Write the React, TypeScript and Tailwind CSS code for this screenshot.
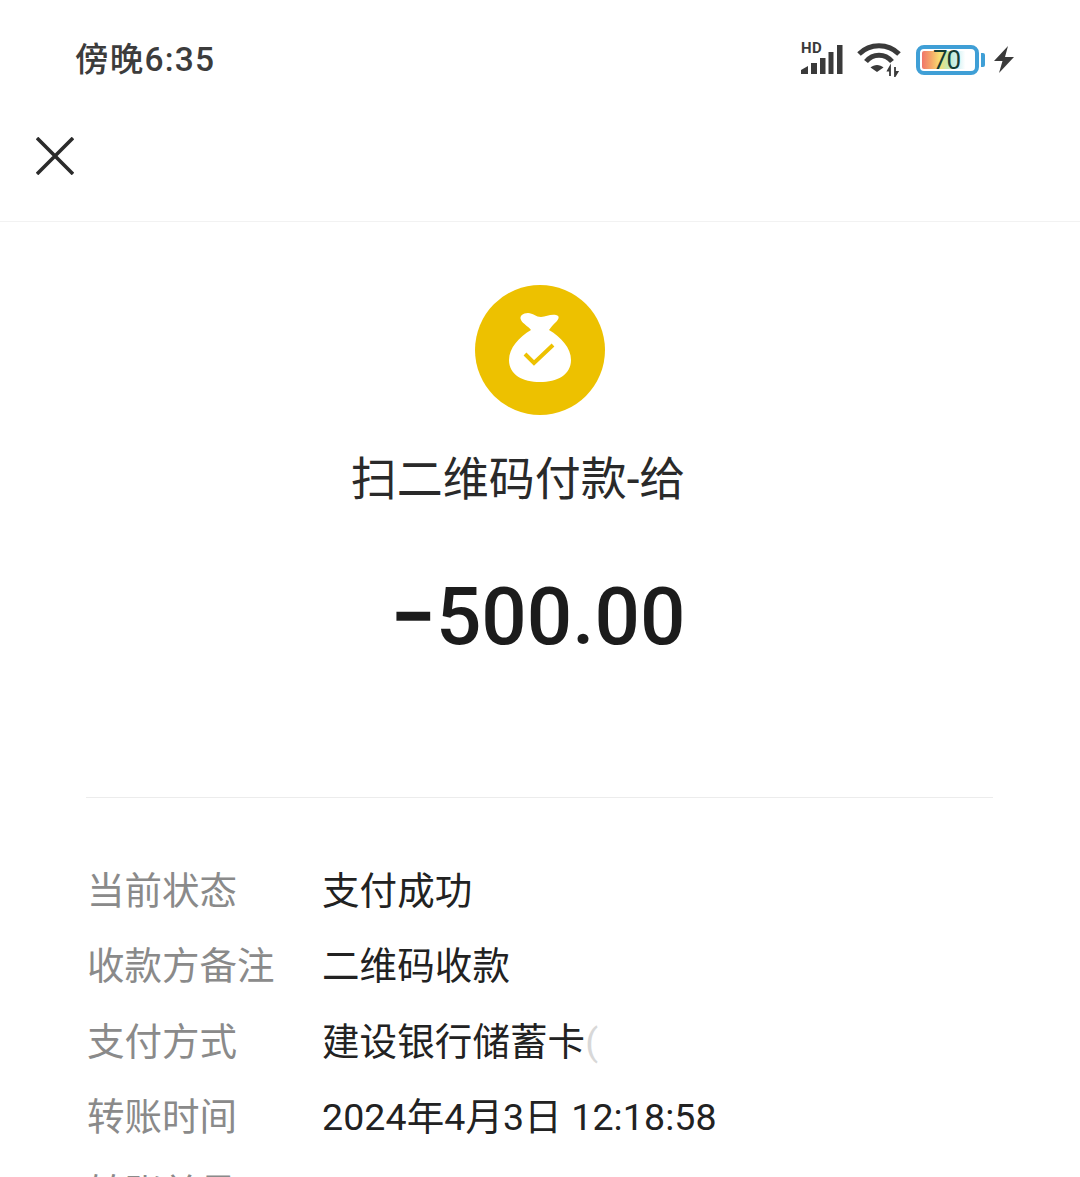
const rows = [
  { label: '当前状态', value: '支付成功' },
  { label: '收款方备注', value: '二维码收款' },
  { label: '支付方式', value: '建设银行储蓄卡', faded: '(' },
  { label: '转账时间', value: '2024年4月3日 12:18:58' },
  { label: '转账单号', value: '' },
];

function SignalIcon() {
  return (
    <div className="relative w-[42px] h-[32px]">
      <span className="absolute left-0 top-[-4px] text-[15px] leading-[16px] font-bold text-[#3a3a3a] font-['Roboto',sans-serif] tracking-[0.5px]">HD</span>
      <svg width="42" height="32" viewBox="0 0 42 32" fill="#3a3a3a">
        <path d="M0 30 V26 L7 22 V30 Z" />
        <rect x="10" y="19" width="6" height="11" />
        <rect x="19" y="14" width="5.5" height="16" />
        <rect x="27.5" y="8" width="5" height="22" />
        <rect x="36" y="1" width="5.5" height="29" />
      </svg>
    </div>
  );
}

function WifiIcon() {
  return (
    <svg width="44" height="34" viewBox="0 0 44 34" fill="none" stroke="#3a3a3a" strokeWidth="5">
      <path d="M2 11 C13 0 31 0 42 11" />
      <path d="M9 18.5 C16 10 28 10 35 18.5" />
      <path d="M20 29 L13.5 24.5 C17 21 23 21 26.5 24.5 Z" fill="#3a3a3a" stroke="none" />
      <path d="M33 33 V25 M31 27.5 L33 24 V27.5 Z M38 24 V32 M38 29 V33 L40.5 29 Z" strokeWidth="1.8" />
    </svg>
  );
}

function BatteryIcon() {
  return (
    <div className="flex items-center">
      <div className="w-[63px] h-[30px] rounded-[8px] border-[4px] border-[#3f9fd6] bg-white p-[2px] flex">
        <div className="relative w-full h-full rounded-[2px] bg-[linear-gradient(90deg,#f0766a_0%,#f5a868_18%,#f8dc72_34%,#c4e8b0_50%,#c8eef0_66%,#ffffff_85%)] flex items-center justify-center">
          <span className="text-[26px] leading-none text-[#143c34] font-['Roboto',sans-serif] tracking-[-1px] mr-[2px]">70</span>
        </div>
      </div>
      <div className="w-[4px] h-[14px] ml-[2px] rounded-r-[2px] bg-[#3f9fd6]" />
    </div>
  );
}

function BoltIcon() {
  return (
    <svg width="20" height="28" viewBox="0 0 20 28" fill="#3a3a3a">
      <path d="M14 0 L0 15 H8.5 L5 27 L20 11 H11 Z" />
    </svg>
  );
}

function BagIcon() {
  return (
    <svg width="62" height="69" viewBox="0 0 62 69">
      <path
        fill="#fff"
        d="M12 7 C10 3 14 0 19 0 C24 0 27 4 32 4 C37 4 41 1 47 2 C51 3 50 6 47 9 C44 12 42 14 40 17 C52 24 62 35 62 47 C62 62 48 69 31 69 C14 69 0 62 0 47 C0 35 10 24 22 17 C19 13 14 11 12 7 Z"
      />
      <path d="M16 41 L25 50 L44 32" fill="none" stroke="#edc100" strokeWidth="4" />
    </svg>
  );
}

export default function App() {
  return (
    <div className="w-[1080px] h-[1177px] overflow-hidden bg-white font-['Roboto','Noto_Sans_CJK_SC',sans-serif]">
      <div className="h-[222px] border-b border-[#f2f2f2]">
        <div className="h-[118px] pl-[75px] pr-[66px] flex items-center justify-between">
          <span className="text-[33.5px] font-medium text-[#3c3c3c] tracking-[1.2px] pt-[3px]">傍晚6:35</span>
          <div className="flex items-center gap-[14px] pt-[1px]">
            <SignalIcon />
            <WifiIcon />
            <div className="flex items-center gap-[9px] ml-[1px]">
              <BatteryIcon />
              <BoltIcon />
            </div>
          </div>
        </div>
        <div className="pl-[36px] pt-[19px]">
          <svg width="38" height="38" viewBox="0 0 38 38" stroke="#2b2b2b" strokeWidth="3.6">
            <path d="M1 1 L37 37 M37 1 L1 37" />
          </svg>
        </div>
      </div>

      <div className="flex flex-col items-center pt-[63px]">
        <div className="w-[130px] h-[130px] rounded-full bg-[#edc100] flex items-center justify-center pb-[5px]">
          <BagIcon />
        </div>
        <div className="mt-[34px] pr-[44px] h-[60px] text-[46px] leading-[60px] text-[#2a2a2a]">扫二维码付款-给</div>
        <div className="mt-[58px] h-[100px] text-[80px] leading-[100px] font-medium text-[#1c1c1c] font-['Roboto',sans-serif]">
          <span className="font-bold -ml-[4px] tracking-[1px]">−</span>500.00
        </div>
      </div>

      <div className="mx-[86px] mt-[130px] border-t border-[#ececec] w-[907px] pt-[55px]">
        {rows.map((row) => (
          <div key={row.label} className="h-[75.5px] flex items-center text-[37.5px] pl-[1px]">
            <span className="w-[235px] text-[#8a8a8a] shrink-0">{row.label}</span>
            <span className="text-[#222222] tracking-[0.1px]">
              {row.value}
              {row.faded && <span className="text-[#d8d8d8]">{row.faded}</span>}
            </span>
          </div>
        ))}
      </div>
    </div>
  );
}
